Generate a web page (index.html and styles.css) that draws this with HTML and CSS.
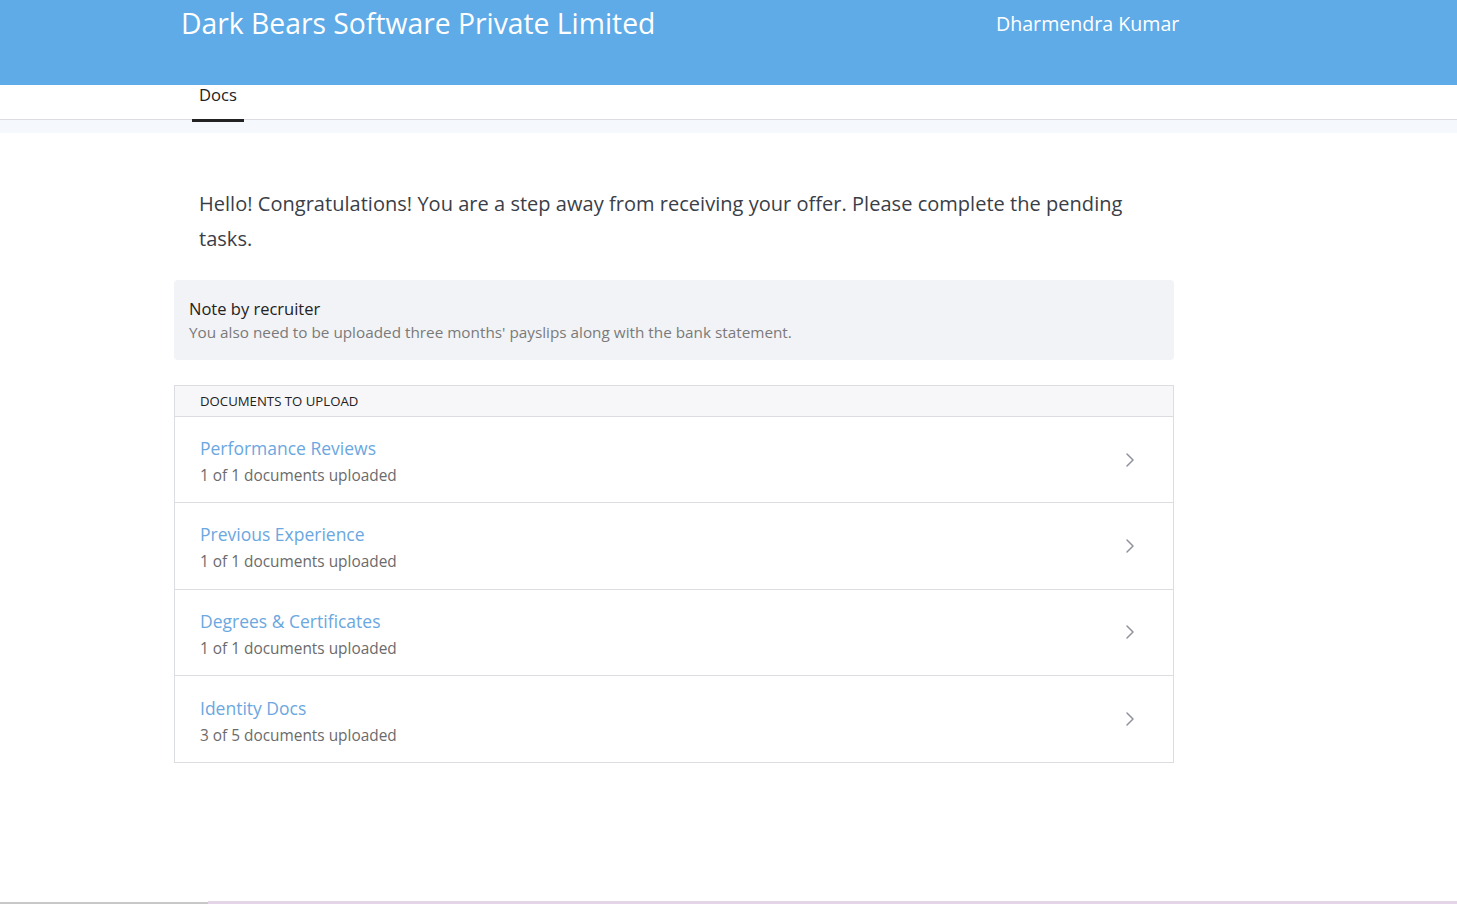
FILE: index.html
```html
<!DOCTYPE html>
<html lang="en">
<head>
<meta charset="utf-8">
<title>Docs</title>
<link rel="stylesheet" href="styles.css">
</head>
<body>
<div class="page">
  <header class="topbar">
    <div class="topbar-inner">
      <div class="company">Dark Bears Software Private Limited</div>
      <div class="user">Dharmendra Kumar</div>
    </div>
  </header>
  <nav class="tabs">
    <div class="tabs-inner">
      <a class="tab active">Docs</a>
    </div>
  </nav>
  <div class="tabs-shade"></div>

  <main class="content">
    <p class="greeting">Hello! Congratulations! You are a step away from receiving your offer. Please complete the pending tasks.</p>

    <section class="note">
      <div class="note-title">Note by recruiter</div>
      <div class="note-text">You also need to be uploaded three months' payslips along with the bank statement.</div>
    </section>

    <section class="docs">
      <div class="docs-head">DOCUMENTS TO UPLOAD</div>
      <div class="doc-row">
        <div class="doc-info">
          <div class="doc-name">Performance Reviews</div>
          <div class="doc-count">1 of 1 documents uploaded</div>
        </div>
        <svg class="chev" width="10" height="16" viewBox="0 0 10 16"><path d="M2 2l6 6-6 6" fill="none" stroke="#8d929b" stroke-width="1.5" stroke-linecap="round" stroke-linejoin="round"/></svg>
      </div>
      <div class="doc-row">
        <div class="doc-info">
          <div class="doc-name">Previous Experience</div>
          <div class="doc-count">1 of 1 documents uploaded</div>
        </div>
        <svg class="chev" width="10" height="16" viewBox="0 0 10 16"><path d="M2 2l6 6-6 6" fill="none" stroke="#8d929b" stroke-width="1.5" stroke-linecap="round" stroke-linejoin="round"/></svg>
      </div>
      <div class="doc-row">
        <div class="doc-info">
          <div class="doc-name">Degrees &amp; Certificates</div>
          <div class="doc-count">1 of 1 documents uploaded</div>
        </div>
        <svg class="chev" width="10" height="16" viewBox="0 0 10 16"><path d="M2 2l6 6-6 6" fill="none" stroke="#8d929b" stroke-width="1.5" stroke-linecap="round" stroke-linejoin="round"/></svg>
      </div>
      <div class="doc-row">
        <div class="doc-info">
          <div class="doc-name">Identity Docs</div>
          <div class="doc-count">3 of 5 documents uploaded</div>
        </div>
        <svg class="chev" width="10" height="16" viewBox="0 0 10 16"><path d="M2 2l6 6-6 6" fill="none" stroke="#8d929b" stroke-width="1.5" stroke-linecap="round" stroke-linejoin="round"/></svg>
      </div>
    </section>
  </main>

  <div class="bottom-strip">
    <div class="strip-left"></div>
    <div class="strip-right"></div>
  </div>
</div>
</body>
</html>
```

FILE: styles.css
```css
* { box-sizing: border-box; }
html, body { margin: 0; padding: 0; }
body {
  font-family: "Open Sans", "Noto Sans", sans-serif;
  color: #333;
  background: #fff;
}
.page {
  min-height: 100vh;
  display: flex;
  flex-direction: column;
}
.topbar {
  background: #5eabe8;
  height: 85px;
}
.topbar-inner {
  display: flex;
  align-items: flex-start;
  padding-left: 181px;
}
.company {
  color: #fff;
  font-size: 28.3px;
  line-height: 47px;
  width: 815px;
}
.user {
  color: #fff;
  font-size: 19.6px;
  line-height: 47px;
}
.tabs {
  height: 35px;
  border-bottom: 1px solid #dcdde3;
  background: #fff;
}
.tabs-inner {
  display: flex;
  padding-left: 192px;
}
.tab {
  position: relative;
  z-index: 1;
  display: block;
  padding: 0 7px;
  height: 37px;
  font-size: 16.6px;
  line-height: 20px;
  color: #222;
  border-bottom: 3px solid #222;
}
.tabs-shade {
  height: 13px;
  background: #f5f9fd;
}
.content {
  flex: 1;
  width: 1000px;
  margin-left: 174px;
}
.greeting {
  margin: 53px 0 0;
  padding: 0 25px;
  font-size: 20px;
  line-height: 35px;
  color: #3a3e47;
  letter-spacing: 0.03px;
}
.note {
  margin-top: 24px;
  background: #f2f3f6;
  border-radius: 4px;
  padding: 16px 15px 0;
  height: 80px;
}
.note-title {
  font-size: 16.5px;
  line-height: 25px;
  color: #222;
}
.note-text {
  font-size: 15.3px;
  line-height: 22px;
  color: #7a7a7a;
}
.docs {
  margin-top: 25px;
  border: 1px solid #dcdde1;
}
.docs-head {
  height: 31px;
  background: #f7f7f9;
  border-bottom: 1px solid #dcdde1;
  padding-left: 25px;
  font-size: 13.2px;
  line-height: 31px;
  color: #222;
}
.doc-row {
  height: 86.3px;
  display: flex;
  align-items: center;
  justify-content: space-between;
  padding: 0 38px 0 25px;
  border-bottom: 1px solid #dcdde1;
}
.doc-row:last-child { border-bottom: 0; }
.doc-info { margin-top: 5px; }
.doc-name {
  font-size: 17.5px;
  line-height: 28px;
  color: #6ba7e0;
}
.doc-count {
  font-size: 15.4px;
  line-height: 28px;
  color: #6b6b6b;
}
.chev { display: block; }
.bottom-strip {
  display: flex;
  height: 3px;
  align-items: flex-end;
}
.strip-left {
  width: 208px;
  height: 2px;
  background: #c8c8c8;
}
.strip-right {
  flex: 1;
  height: 3px;
  background: #e4d6e8;
}
```
